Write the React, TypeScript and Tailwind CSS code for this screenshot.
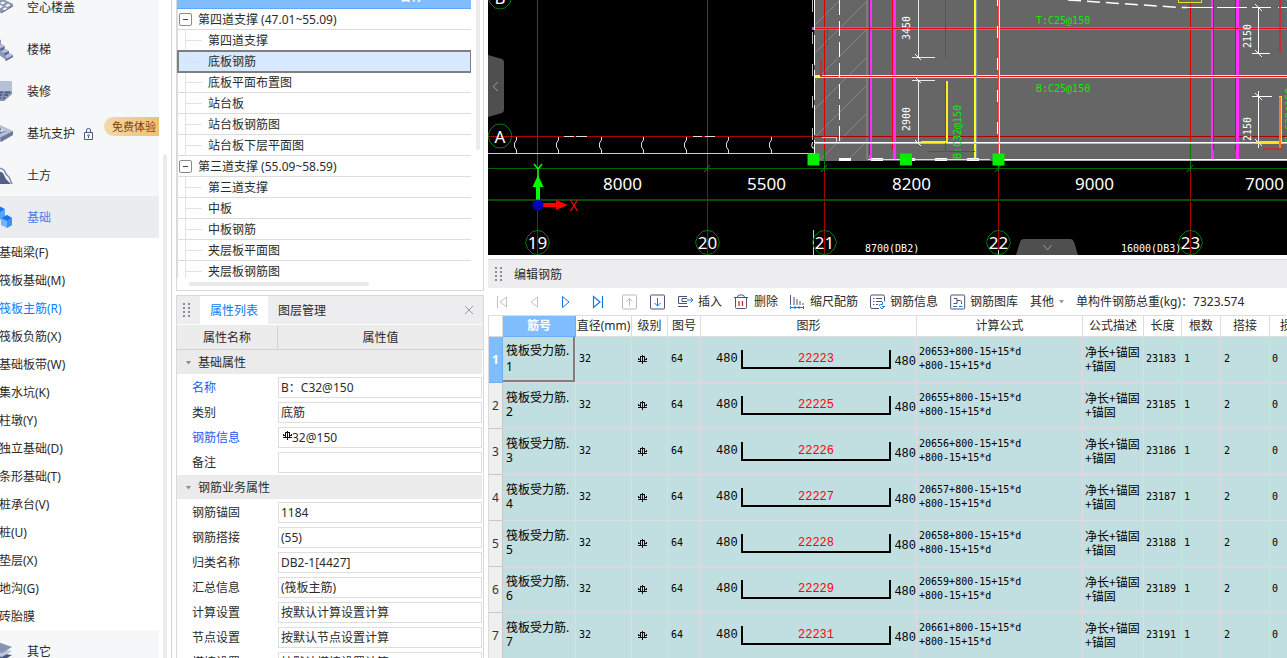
import React from "react";

const uiFont = "font-['Noto_Sans','Noto_Sans_CJK_SC',sans-serif]";
const monoFont = "font-['DejaVu_Sans_Mono','Noto_Sans_CJK_SC',monospace]";

/* ---------- component navigation ---------- */

type NavItem = { label: string; icon: React.ReactNode; active?: boolean; locked?: boolean };

const navItems: NavItem[] = [
  {
    label: "空心楼盖",
    icon: (
      <>
        <path d="M-8 8 L3 3 L13 8 V10 L1 17 L-8 11Z" fill="#8c97b5" />
        <path d="M0 7l3-1.6 2.500 1.400-3 1.700zM5 9.500l3-1.700 2.500 1.300-3 1.800zM-2 10.500l2.500-1.500 2.600 1.500-2.800 1.700zM2.500 13l2.700-1.700 2 1.200-2.700 1.900z" fill="#f5f7f9" />
        <path d="M1 17 L13 10" stroke="#5a688f" />
      </>
    ),
  },
  {
    label: "楼梯",
    icon: (
      <>
        <path d="M-2 1 L1 2 V6 L5 8 V11 L9 13 V15 L13 17 V19 L6 22 L-2 16Z" fill="#8b98b8" />
        <path d="M1 6 L5 8 L0 10 L-2 9ZM5 11 L9 13 L4 15 L1 13ZM9 15 L13 17 L7 20 L5 18Z" fill="#b5bfd6" />
        <path d="M5 22 L13 18 V19 L6 23ZM0 11 L4 9 V11 L1 13ZM4 15.500 L9 13.500 V15 L5 17.500Z" fill="#52618a" />
      </>
    ),
  },
  {
    label: "装修",
    icon: (
      <>
        <path d="M-2 1 H12 V13 L4 21 H-2Z" fill="#b7c0d6" />
        <path d="M-2 11 H12 V14 L4 21 H-2Z" fill="#8592b2" />
        <path d="M-2 12.500H3M5 12.500H10M-2 15H2M4 15H8M-1 18H1M3 18H5" stroke="#47567f" strokeWidth="1.500" />
      </>
    ),
  },
  {
    label: "基坑支护",
    locked: true,
    icon: (
      <>
        <path d="M-2 2 L13 9 L1 15 L-2 14Z" fill="#b5bfd6" />
        <path d="M-2 5 L6 9 L0 12 L-2 11Z" fill="#7583a7" />
        <path d="M2 6 V10 M0 9 L5 8" stroke="#eef1f6" />
        <path d="M1 15 L13 9 V13 L1 20Z" fill="#6b799f" />
        <path d="M-2 13 L1 15 V20 L-2 18Z" fill="#8d99b8" />
      </>
    ),
  },
  {
    label: "土方",
    icon: (
      <>
        <path d="M-1 7 L3 9 L6 15 L11 20 H-1Z" fill="#52618a" />
        <path d="M0 4 L4 6 L6 10 L9 13 L12 20" fill="none" stroke="#7482a5" strokeWidth="1.300" />
      </>
    ),
  },
  {
    label: "基础",
    active: true,
    icon: (
      <>
        <path d="M-1 1 L5 4 V11 L0 14 L-2 13Z" fill="#5ba4fb" />
        <path d="M-1 0 L5 3 L0 6 L-3 5Z" fill="#1873ee" />
        <path d="M1 12 L7 9 L12 12 V19 L7 22 L1 19Z" fill="#75b4fd" />
        <path d="M1 12 L7 9 L12 12 L7 15Z" fill="#1873ee" />
        <path d="M7 15 L12 12 V19 L7 22Z" fill="#3c91f8" />
      </>
    ),
  },
];

const subItems = [
  "基础梁(F)", "筏板基础(M)", "筏板主筋(R)", "筏板负筋(X)", "基础板带(W)", "集水坑(K)", "柱墩(Y)",
  "独立基础(D)", "条形基础(T)", "桩承台(V)", "桩(U)", "垫层(X)", "地沟(G)", "砖胎膜",
];

function NavIcon({ children }: { children: React.ReactNode }) {
  return <svg className="h-6 w-[14px] shrink-0" viewBox="0 0 14 24">{children}</svg>;
}

function NavButton({ item }: { item: NavItem }) {
  return (
    <button
      className={`relative flex h-[42px] w-full shrink-0 items-center gap-[13px] pt-[2px] text-left ${item.active ? "bg-[#ebecf0] text-[#4a80e8]" : "bg-[#f5f7f9]"}`}
    >
      <NavIcon>{item.icon}</NavIcon>
      {item.label}
      {item.locked && (
        <>
          <svg className="-ml-1 h-3 w-[9px]" viewBox="0 0 9 12" fill="none" stroke="#4d5a80">
            <path d="M.5 4.500h8v7h-8zM2.500 4.500V2q0-1.500 2-1.500t2 1.500v2.500M4.500 8v2" />
            <circle cx="4.500" cy="7.500" r=".8" />
          </svg>
          <span className="absolute top-[5px] right-0 flex h-[19px] items-center rounded-l-full bg-linear-to-r from-[#f3d8ab] to-[#edc272] pr-[3px] pl-2 text-[11px] text-[#7a3f0c]">
            免费体验
          </span>
        </>
      )}
    </button>
  );
}

function Sidebar() {
  return (
    <aside className="flex w-[172px] shrink-0 justify-between border-r border-[#d4d4d4] bg-white">
      <nav className="-mt-[14px] flex w-[159px] flex-col overflow-hidden">
        {navItems.map((n) => <NavButton key={n.label} item={n} />)}
        {subItems.map((s) => (
          <button key={s} className={`-ml-px flex h-7 shrink-0 items-center pt-[2px] text-left ${s === "筏板主筋(R)" ? "text-[#0b80ff]" : ""}`}>
            {s}
          </button>
        ))}
        <NavButton
          item={{
            label: "其它",
            icon: (
              <>
                <path d="M-2 13 L12 15 L2 21 L-2 20Z" fill="#47567f" />
                <path d="M-2 8 L12 11 L2 17 L-2 16Z" fill="#bcc5d9" />
                <path d="M-2 2 L12 7 L2 13 L-2 12Z" fill="#8793b4" />
              </>
            ),
          }}
        />
      </nav>
      <div className="mt-[154px] mr-1 w-1 rounded-t bg-[#ebebeb]" />
    </aside>
  );
}

/* ---------- drawing list ---------- */

const tree: { label: string; group?: boolean; selected?: boolean }[] = [
  { label: "第四道支撑 (47.01~55.09)", group: true },
  { label: "第四道支撑" },
  { label: "底板钢筋", selected: true },
  { label: "底板平面布置图" },
  { label: "站台板" },
  { label: "站台板钢筋图" },
  { label: "站台板下层平面图" },
  { label: "第三道支撑 (55.09~58.59)", group: true },
  { label: "第三道支撑" },
  { label: "中板" },
  { label: "中板钢筋" },
  { label: "夹层板平面图" },
  { label: "夹层板钢筋图" },
];

function DrawingList() {
  return (
    <section className="flex h-[291px] shrink-0 border border-t-0 border-[#d9d9d9] bg-white">
      <div className="min-w-0 flex-1">
        <div className="h-[278px] overflow-hidden">
          <div className="-mt-[15px] h-6 overflow-hidden border-b border-[#5fa6f5] bg-[#80bdff]">
            <div className="w-[468px] text-center leading-6 font-bold text-white">名称</div>
          </div>
          <ul role="tree" className="border-l border-[#dcdcdc]">
            {tree.map((t, i) => (
              <li
                key={i}
                role="treeitem"
                className={`flex h-[21px] items-center border-b ${t.selected ? "border-[#d9d9d9] bg-[#d6e9fe] outline-2 -outline-offset-1 outline-[#7f7f7f]" : "border-[#dcdcdc]"}`}
              >
                {t.group ? (
                  <button aria-label="收起" className="mr-[6px] ml-px flex h-[13px] w-[13px] items-center justify-center rounded-[2px] border border-[#8a8a8a] bg-white">
                    <span className="h-px w-[5px] bg-[#444]" />
                  </button>
                ) : (
                  <span className={`mr-[6px] ml-[7px] flex h-[21px] w-[17px] items-center border-[#e2e2e2] ${t.selected ? "" : "border-l"}`}>
                    <span className="h-px w-full bg-[#e2e2e2]" />
                  </span>
                )}
                <span className="pt-[2px]">{t.label}</span>
              </li>
            ))}
          </ul>
        </div>
        <div className="mt-1 ml-3 h-1 w-[180px] rounded-full bg-[#e8e8e8]" />
      </div>
      <div className="mr-[3px] ml-[5px] h-[150px] w-1 rounded-b-full bg-[#ebebeb]" />
    </section>
  );
}

/* ---------- property panel ---------- */

function RebarSign() {
  return (
    <svg className="inline-block h-[9px] w-[9px] shrink-0" viewBox="0 0 9 9" fill="none" stroke="#111" shapeRendering="crispEdges">
      <path d="M4.500 0v9M2 1.500h5M2.500 1v6M6.500 1v6M.5 3v2M8.500 3v2M1 4.500h1M7 4.500h1M0 6.500h9" />
    </svg>
  );
}

function Grip() {
  return (
    <svg className="h-[14px] w-[7px]" viewBox="0 0 7 14" fill="#8c8c8c">
      {[0, 4, 8, 12].map((y) => (
        <React.Fragment key={y}>
          <rect x="0" y={y} width="2" height="2" />
          <rect x="5" y={y} width="2" height="2" />
        </React.Fragment>
      ))}
    </svg>
  );
}

function GroupRow({ label }: { label: string }) {
  return (
    <button className="mr-px mb-px flex h-6 shrink-0 items-center bg-[#ebebeb] pt-px text-left">
      <svg className="mr-[7px] ml-[9px] h-1 w-[5px]" viewBox="0 0 5 4"><path d="M0 0h5L2.500 3.500z" fill="#8a8a8a" /></svg>
      {label}
    </button>
  );
}

function Prop({ label, value, link, sign }: { label: string; value: string; link?: boolean; sign?: boolean }) {
  return (
    <label className="flex h-[25px] shrink-0 items-center">
      <span className={`w-[101px] shrink-0 pl-[15px] ${link ? "text-[#1c5cf0]" : ""}`}>{label}</span>
      <span className="mr-px flex h-[21px] min-w-0 flex-1 items-center border border-[#dedede] pl-[2px]">
        {sign && <span className="mb-1 ml-[2px] flex"><RebarSign /></span>}
        <input className="h-[19px] min-w-0 flex-1 bg-transparent pb-px outline-none" defaultValue={value} />
      </span>
    </label>
  );
}

function Properties() {
  return (
    <section className="mt-1 flex min-h-0 flex-1 flex-col overflow-hidden border border-b-0 border-[#d9d9d9] bg-white">
      <header className="flex h-7 shrink-0 items-center bg-[#ededf0]">
        <span className="mx-[6px] mr-[10px] flex"><Grip /></span>
        <button className="h-7 w-[68px] bg-white pt-px text-[#0b7cf5]">属性列表</button>
        <button className="ml-[10px] pt-px">图层管理</button>
        <button aria-label="关闭" className="mr-[9px] ml-auto">
          <svg className="h-[10px] w-[10px]" viewBox="0 0 10 10" stroke="#9a9a9a"><path d="M1 1l8 8M9 1l-8 8" /></svg>
        </button>
      </header>
      <div className="mt-px flex h-[25px] shrink-0 border-b border-[#d2d2d2] bg-[#ececec] pt-px leading-6">
        <div className="w-[101px] border-r border-[#d2d2d2] text-center">属性名称</div>
        <div className="flex-1 text-center">属性值</div>
      </div>
      <GroupRow label="基础属性" />
      <Prop label="名称" value="B：C32@150" link />
      <Prop label="类别" value="底筋" />
      <Prop label="钢筋信息" value="32@150" link sign />
      <Prop label="备注" value="" />
      <GroupRow label="钢筋业务属性" />
      <Prop label="钢筋锚固" value="1184" />
      <Prop label="钢筋搭接" value="(55)" />
      <Prop label="归类名称" value="DB2-1[4427]" />
      <Prop label="汇总信息" value="(筏板主筋)" />
      <Prop label="计算设置" value="按默认计算设置计算" />
      <Prop label="节点设置" value="按默认节点设置计算" />
      <Prop label="搭接设置" value="按默认搭接设置计算" />
    </section>
  );
}

/* ---------- CAD view ---------- */

const axes = [
  { x: 537.5, n: "19" }, { x: 707.5, n: "20" }, { x: 824.5, n: "21" }, { x: 998.5, n: "22" }, { x: 1190.5, n: "23" },
];
const spans: [number, string][] = [[622.5, "8000"], [766.5, "5500"], [911.5, "8200"], [1094.5, "9000"], [1264.5, "7000"]];

function Bubble({ x, y, n }: { x: number; y: number; n: string }) {
  return (
    <g>
      <polygon
        points={`${x - 5},${y - 11} ${x},${y - 12} ${x + 5},${y - 11} ${x + 10},${y - 6} ${x + 12},${y} ${x + 10},${y + 6} ${x + 5},${y + 11} ${x},${y + 12} ${x - 5},${y + 11} ${x - 10},${y + 6} ${x - 12},${y} ${x - 10},${y - 6}`}
        fill="none" stroke="#0b7a0b"
      />
      <text x={x} y={y + 6.5} textAnchor="middle" className="text-[17px]" fill="#fff">{n}</text>
    </g>
  );
}

function CadView() {
  return (
    <svg className="block h-[255px] w-full bg-black" viewBox="488 0 799 255" preserveAspectRatio="xMinYMin slice">
      <defs>
        <pattern id="hatch" width="28" height="28" patternUnits="userSpaceOnUse">
          <path d="M-2 30L30 -2" stroke="#858585" />
        </pattern>
      </defs>
      <rect x="814" y="0" width="473" height="161" fill="#666" />
      <rect x="815" y="0" width="52" height="160" fill="url(#hatch)" />
      <g shapeRendering="crispEdges" fill="none">
        <path d="M867 0V160" stroke="#7c7c7c" strokeWidth="2" />
        <path d="M488 136.500H1287" stroke="#b00000" />
        <path d="M537.500 0V153M707.500 0V153M824.500 0V160M1190.500 0V150" stroke="#d40000" />
        <path d="M537.500 172V255M707.500 172V255M824.500 172V255M998.500 172V255M1190.500 172V255" stroke="#a80000" />
        <path d="M537.500 153V172M707.500 153V172M824.500 150V172M998.500 146V172M1190.500 144V172" stroke="#087508" />
        <path d="M488 153.500H814" stroke="#ccc" />
        <path d="M564 136.500H574M576 136.500H587M693 136.500H702M705 136.500H715" stroke="#ddd" />
        <path d="M488 168.500H1287" stroke="#006400" />
        <path d="M488 200H1287" stroke="#064d06" strokeWidth="2" />
        {/* slab reinforcement */}
        <path d="M870.500 0V160M894.500 0V160M1212.500 0V160M1237.500 0V160M812 28.500H1287" stroke="#ff2dff" strokeWidth="3" />
        <path d="M869.500 0V155M892.500 0V150M1213.500 0V150M1235.500 0V150M814 28.500H1287" stroke="#f00018" />
        <path d="M814 76.500H1287" stroke="#ffff20" strokeWidth="3" />
        <path d="M975 0V160" stroke="#ffff20" strokeWidth="2" />
        <path d="M820 76.500H1287" stroke="#f01010" />
        <path d="M976.500 0V158" stroke="#7d8ea6" />
        <path d="M998.500 0V160" stroke="#ff4040" />
        <path d="M999.500 0V160" stroke="#eee" />
        <path d="M997.500 0V160" stroke="#fff" strokeDasharray="12 20" strokeDashoffset="6" />
        <path d="M814.500 0V160" stroke="#fff" strokeDasharray="30 5" />
        <path d="M812.500 0V160" stroke="#bbb" strokeDasharray="12 20" />
        <path d="M839.500 0V142" stroke="#fff" strokeDasharray="15 6" />
        <path d="M822 137H836V142" stroke="#ccc" />
        <path d="M814 142.500H1287M998 159.500H1287" stroke="#fff" />
        <path d="M814 143.500H1287M998 160.500H1287" stroke="#bbb" />
        <path d="M839 159.500H990" stroke="#fff" strokeWidth="3" strokeDasharray="12 20" />
        <path d="M868 159.500H990" stroke="#ddd" />
        <path d="M827.500 28V45M945.500 0V57M945.500 81V151.500M928 151.500H975" stroke="#f01010" />
        <path d="M821 60V77" stroke="#b83038" strokeWidth="2" />
        <path d="M947 81V142M921 142H947" stroke="#ffee20" strokeWidth="2" />
        {/* dimensions */}
        <path d="M918.500 0V57M912 57.500H935M918.500 80V143M912 80.500H935" stroke="#e8e8e8" />
        <path d="M1258.500 7V53M1252 53.500H1270M1258.500 91V148M1252 96.500H1272" stroke="#fff" />
        <path d="M1187 7.500H1213M1217 7.500H1247M1252 7.500H1271M1278 7.500H1287" stroke="#fff" />
        <path d="M1280 0V53M1263 149H1280V142" stroke="#c83030" strokeWidth="2" />
        <path d="M1280.500 96V142M1256 142.500H1282" stroke="#ffe020" strokeWidth="3" />
        <path d="M1280 97V148" stroke="#ff7a20" strokeWidth="2" />
        <rect x="1178.500" y="-5" width="23" height="7" stroke="#e8e020" fill="#666" />
        <path d="M813.500 230V255M998.500 250V255" stroke="#ccc" />
      </g>
      <path d="M1068 0L1180 7.500H1187" stroke="#fff" fill="none" strokeDasharray="13 6" strokeWidth="1.500" />
      <g stroke="#fff" fill="none">
        {[516, 558, 601, 643, 686, 728, 771].map((x) => (
          <path key={x} d={`M${x}.500 137v3l-2 3v4l2 3v3`} stroke="#ddd" />
        ))}
        <path d="M915 54l6 6M915 77l6 6M915 140l6 6M1255 4l7 7M1255 50l7 7M1255 93l7 7M1255 139l7 7" />
        <path d="M812.500 142q-1.500 4 0 6h2" />
      </g>
      <path d="M704 172l6-7M821 172l6-7M995 172l6-7M1187 172l6-7" stroke="#0a8f0a" />
      <g fill="#00f000">
        <rect x="807.500" y="153.500" width="12" height="12" />
        <rect x="900" y="153.500" width="12" height="12" />
        <rect x="992.500" y="153.500" width="12" height="12" />
      </g>
      <g className="font-['DejaVu_Sans_Mono',monospace] text-[10px]">
        <g fill="#00f000">
          <text x="1036" y="24">T:C25@150</text>
          <text x="1036" y="92">B:C25@150</text>
          <text transform="translate(961 159) rotate(-90)">B:C32@150</text>
          <text transform="translate(1293 142) rotate(-90)">B:C32@150</text>
        </g>
        <text transform="translate(1293 38) rotate(-90)" fill="#209090">C25@150</text>
        <g fill="#fff">
          <text transform="translate(910 40) rotate(-90)">3450</text>
          <text transform="translate(910 131) rotate(-90)">2900</text>
          <text transform="translate(1251 48) rotate(-90)">2150</text>
          <text transform="translate(1251 141) rotate(-90)">2150</text>
          <text x="865" y="252">8700(DB2)</text>
          <text x="1121" y="252">16000(DB3)</text>
        </g>
      </g>
      {spans.map(([x, s]) => (
        <text key={x} x={x} y="190" textAnchor="middle" className="text-[17px]" fill="#fff">{s}</text>
      ))}
      {axes.map((a) => <Bubble key={a.n} x={a.x} y={242.5} n={a.n} />)}
      <Bubble x={500} y={136} n="A" />
      <Bubble x={500} y={-3} n="B" />
      {/* coordinate origin */}
      <path d="M538 200V184" stroke="#00ff00" strokeWidth="4" />
      <path d="M532.500 187L538 175L543.500 187Z" fill="#00ff00" />
      <path d="M534 164l4 5 4-5M538 169v8" stroke="#00ff00" strokeWidth="1.500" fill="none" />
      <path d="M543 205H557" stroke="#f00" strokeWidth="4" />
      <path d="M556 200L568 205L556 210Z" fill="#f00" />
      <path d="M570.500 200l7 11M577.500 200l-7 11" stroke="#f00" strokeWidth="1.300" />
      <circle cx="538" cy="205" r="5.500" fill="#0000b8" />
      {/* collapse handles */}
      <path d="M488 55L502 59Q504 60 504 62V110Q504 112 502 113L488 117Z" fill="#4f4f4f" />
      <path d="M498 82l-5 4.500 5 4.500" stroke="#999" fill="none" />
      <path d="M1016 255L1020 242Q1021 239 1024 239H1070Q1073 239 1074 242L1078 255Z" fill="#4f4f4f" />
      <path d="M1043.500 245l4 5 4-5" stroke="#999" fill="none" />
    </svg>
  );
}

/* ---------- rebar editor ---------- */

const ink = "#4a5578";
const blue = "#1677e8";

function Icon({ children }: { children: React.ReactNode }) {
  return <svg className="h-4 w-4 shrink-0" viewBox="0 0 16 16" fill="none">{children}</svg>;
}

function Tool({ label, children }: { label: string; children: React.ReactNode }) {
  return (
    <button className="flex shrink-0 items-center gap-1">
      <Icon>{children}</Icon>
      <span className="pt-px">{label}</span>
    </button>
  );
}

function Toolbar() {
  return (
    <div className="flex h-[27px] shrink-0 items-center gap-3 overflow-hidden pl-[6px] whitespace-nowrap">
      <div className="mr-1 flex gap-4">
        <button aria-label="第一条"><Icon><path d="M3.500 2v12M12.500 3v10L6 8z" stroke="#c2c2c2" /></Icon></button>
        <button aria-label="上一条"><Icon><path d="M11.500 3v10L5 8z" stroke="#c2c2c2" /></Icon></button>
        <button aria-label="下一条"><Icon><path d="M4.500 2.500v11L11 8z" stroke={blue} /></Icon></button>
        <button aria-label="最后一条"><Icon><path d="M3.500 2.500v11L10 8zM12.500 2v12" stroke={blue} strokeWidth="1.200" /></Icon></button>
      </div>
      <button aria-label="上移"><Icon><rect x=".5" y="1" width="14" height="14" rx="1" stroke="#bbb" /><path d="M7.500 12V5M4.500 7.500l3-3 3 3" stroke="#bbb" /></Icon></button>
      <button aria-label="下移"><Icon><rect x=".5" y="1" width="14" height="14" rx="1" stroke={ink} /><path d="M7.500 4v8M4.500 9l3 3 3-3" stroke={blue} /></Icon></button>
      <Tool label="插入"><path d="M9 2.500H.500v7H9M0 12.500h10M9 4.500H4v3h5" stroke={ink} /><path d="M9 6h6M12.500 3.500L15 6l-2.500 2.500" stroke={blue} /></Tool>
      <Tool label="删除"><path d="M0 3.500h14M3.500 3.500q0-2.500 2-2.500h3q2 0 2 2.500M1.500 3.500v10q0 1 1 1h9q1 0 1-1v-10" stroke={ink} /><path d="M5 7v5M8.500 7v5" stroke="#e02020" strokeWidth="1.300" /></Tool>
      <Tool label="缩尺配筋"><path d="M.5 1v10M4 3v8M7 5v6M10 7v4M13 9v2" stroke={ink} /><path d="M0 13.500h14M.500 12v3M5 12v3M9 12v3M13.500 12v3" stroke={blue} /></Tool>
      <Tool label="钢筋信息"><path d="M9 14.500H2q-1.500 0-1.500-1.500V2.500Q.5 1 2 1h11q1.500 0 1.500 1.500v5M3 4.500h1.500M6 4.500h6M3 7.500h1.500M6 7.500h6M3 10.500h1.500M6 10.500h2" stroke={ink} /><path d="M12.500 8v2.500h-2q-1.500 0-1 1.500M10 13l2 2 3-3M12 12.500h3" stroke={blue} /></Tool>
      <Tool label="钢筋图库"><rect x=".7" y="1" width="14" height="14" rx="1" stroke={ink} /><path d="M3.500 9.500H7V4.500H4M7 6.500h3.500q1 0 1 1V10" stroke={ink} /><path d="M3 12.500h4M9 12.500h3.500" stroke={blue} /></Tool>
      <button className="flex shrink-0 items-center gap-[5px] pt-px">
        其他
        <svg className="h-1 w-[5px]" viewBox="0 0 5 4"><path d="M0 0h5L2.500 3.500z" fill="#999" /></svg>
      </button>
      <span className="pt-px">单构件钢筋总重(kg)：7323.574</span>
    </div>
  );
}

const rows = [
  { n: 1, base: 20653 }, { n: 2, base: 20655 }, { n: 3, base: 20656 }, { n: 4, base: 20657 },
  { n: 5, base: 20658 }, { n: 6, base: 20659 }, { n: 7, base: 20661 },
];

const headers = ["直径(mm)", "级别", "图号", "图形", "计算公式", "公式描述", "长度", "根数", "搭接", "损耗(%)"];

function RebarTable() {
  return (
    <div className="min-h-0 flex-1 overflow-hidden border-t border-l border-[#dcdcdc]">
      <table className="w-[843px] min-w-full table-fixed border-separate border-spacing-0">
        <colgroup>
          <col className="w-[14px]" /><col className="w-[73px]" /><col className="w-[56px]" /><col className="w-[36px]" />
          <col className="w-[33px]" /><col className="w-[216px]" /><col className="w-[166px]" /><col className="w-[61px]" />
          <col className="w-[38px]" /><col className="w-[39px]" /><col className="w-[49px]" /><col className="w-[62px]" />
        </colgroup>
        <thead>
          <tr className="h-[21px] leading-5 whitespace-nowrap">
            <td className="border-r border-b border-[#dcdcdc] bg-white p-0" />
            <th className="border-r border-b border-[#6aaef8] bg-[#80bdff] p-0 font-bold text-white">筋号</th>
            {headers.map((h) => (
              <th key={h} className="border-r border-b border-[#dcdcdc] bg-white p-0 font-normal">{h}</th>
            ))}
          </tr>
        </thead>
        <tbody className={`${monoFont} text-[10px] leading-[14px] text-black`}>
          {rows.map(({ n, base }) => (
            <tr key={n} className="h-[46px] bg-[#c1dee0] [&>td]:border-r [&>td]:border-b [&>td]:border-[#dcdcdc] [&>td]:p-0 [&>td]:pb-px">
              <th className={`border-r border-b p-0 text-center text-[12px] ${uiFont} ${n === 1 ? "border-[#6aaef8] bg-[#80bdff] font-bold text-white" : "border-[#c8c8c8] bg-[#efefef] font-normal text-[#333]"}`}>{n}</th>
              <td className={`text-[12px] ${uiFont} ${n === 1 ? "leading-4 shadow-[inset_-2px_-2px_0_#7f7f7f]" : ""}`}>
                <div className="pl-[3px]">筏板受力筋.<br />{n}</div>
              </td>
              <td><div className="pl-[3px]">32</div></td>
              <td><div className="flex pt-px pl-[6px]"><RebarSign /></div></td>
              <td><div className="pl-[3px]">64</div></td>
              <td className="font-['Liberation_Mono',monospace] text-[12px]">
                <div className="flex h-[19px] items-end gap-[3px] pl-[15px]">
                  <span className="self-center">480</span>
                  <span className="h-[19px] w-[151px] border-2 border-t-0 border-black pt-[2px] text-center text-[#f00]">{base + 1570}</span>
                  <span>480</span>
                </div>
              </td>
              <td><div className="pl-[2px]">{base}+800-15+15*d<br />+800-15+15*d</div></td>
              <td className="text-[12px]"><div className="pl-[2px] font-['Noto_Sans_CJK_SC',sans-serif]">净长+锚固<br />+锚固</div></td>
              <td><div className="pl-[2px]">{base + 2530}</div></td>
              <td><div className="pl-[2px]">1</div></td>
              <td><div className="pl-[3px]">2</div></td>
              <td><div className="pl-[2px]">0</div></td>
            </tr>
          ))}
        </tbody>
      </table>
    </div>
  );
}

export default function App() {
  return (
    <div className={`flex h-screen gap-1 overflow-hidden bg-white text-[12px] leading-4 text-[#2b2b2b] ${uiFont}`}>
      <Sidebar />
      <div className="flex w-[308px] shrink-0 flex-col">
        <DrawingList />
        <Properties />
      </div>
      <main className="flex min-w-0 flex-1 flex-col">
        <CadView />
        <section className="mt-1 flex min-h-0 flex-1 flex-col border-t border-[#d9d9d9]">
          <header className="flex h-7 shrink-0 items-center gap-3 bg-[#ededf0] pl-[7px]">
            <Grip />
            <h2 className="pt-[2px]">编辑钢筋</h2>
          </header>
          <Toolbar />
          <RebarTable />
        </section>
      </main>
    </div>
  );
}
